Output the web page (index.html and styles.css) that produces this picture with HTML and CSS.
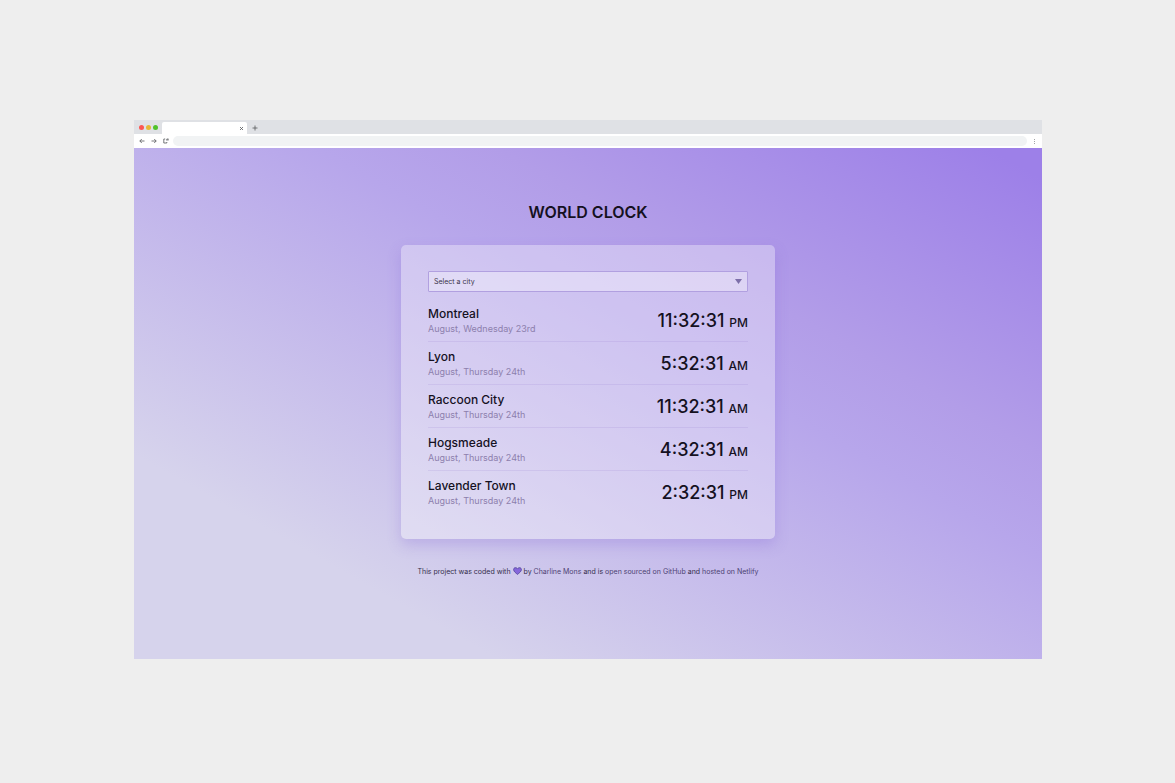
FILE: index.html
```html
<!DOCTYPE html>
<html lang="en">
<head>
<meta charset="utf-8">
<meta name="viewport" content="width=device-width, initial-scale=1">
<title>World Clock</title>
<link rel="stylesheet" href="styles.css">
</head>
<body>
<div class="browser">
  <div class="tabs">
    <div class="dots"><span class="dot red"></span><span class="dot yellow"></span><span class="dot green"></span></div>
    <div class="tab">
      <button class="icon-btn" type="button" aria-label="Close tab"><svg width="5" height="5" viewBox="0 0 5 5"><path d="M1 1l3 3M4 1L1 4"/></svg></button>
    </div>
    <button class="icon-btn new-tab" type="button" aria-label="New tab"><svg width="6" height="6" viewBox="0 0 6 6"><path d="M3 .5v5M.5 3h5"/></svg></button>
  </div>
  <div class="toolbar">
    <button class="icon-btn" type="button" aria-label="Back"><svg width="6" height="6" viewBox="0 0 6 6"><path d="M5.5 3H.8M2.8 1L.8 3l2 2"/></svg></button>
    <button class="icon-btn" type="button" aria-label="Forward"><svg width="6" height="6" viewBox="0 0 6 6"><path d="M.5 3h4.7M3.2 1l2 2-2 2"/></svg></button>
    <button class="icon-btn" type="button" aria-label="Reload"><svg width="6" height="6" viewBox="0 0 6 6"><path d="M2.2 1H.8v4h3V4M3.8 2.6V1h1.7M5 1v1.6"/></svg></button>
    <input class="address" type="text" aria-label="Address">
    <button class="icon-btn menu" type="button" aria-label="Menu"><svg width="3" height="5" viewBox="0 0 3 5"><path d="M1.5 0v1M1.5 2v1M1.5 4v1"/></svg></button>
  </div>
  <main class="page">
    <h1 class="title">WORLD CLOCK</h1>
    <section class="card">
      <div class="picker">
        <select class="select" aria-label="Select a city"><option>Select a city</option><option>Montreal</option><option>Lyon</option></select>
        <svg class="caret" width="7" height="5" viewBox="0 0 7 5"><path d="M0 0h7L3.5 5z"/></svg>
      </div>
      <ul class="cities">
        <li class="city"><div><h2 class="name">Montreal</h2><p class="date">August, Wednesday 23rd</p></div><p class="time">11:32:31 <small class="period">PM</small></p></li>
        <li class="city"><div><h2 class="name">Lyon</h2><p class="date">August, Thursday 24th</p></div><p class="time">5:32:31 <small class="period">AM</small></p></li>
        <li class="city"><div><h2 class="name">Raccoon City</h2><p class="date">August, Thursday 24th</p></div><p class="time">11:32:31 <small class="period">AM</small></p></li>
        <li class="city"><div><h2 class="name">Hogsmeade</h2><p class="date">August, Thursday 24th</p></div><p class="time">4:32:31 <small class="period">AM</small></p></li>
        <li class="city"><div><h2 class="name">Lavender Town</h2><p class="date">August, Thursday 24th</p></div><p class="time">2:32:31 <small class="period">PM</small></p></li>
      </ul>
    </section>
    <footer class="footer">This project was coded with <svg class="heart" width="9" height="8" viewBox="0 0 9 8"><path d="M4.5 7.4C2.8 6 .6 4.5.6 2.6.6.4 3.3 0 4.5 1.8 5.7 0 8.4.4 8.4 2.6c0 1.9-2.2 3.4-3.9 4.8z"/></svg> by <a href="#">Charline Mons</a> and is <a href="#">open sourced on GitHub</a> and <a href="#">hosted on Netlify</a></footer>
  </main>
</div>
</body>
</html>
```

FILE: styles.css
```css
* { box-sizing: border-box; }

body {
  margin: 0;
  min-height: 100vh;
  padding: 120px 133px 124px 134px;
  display: flex;
  background: #eeeeee;
  font-family: Inter, "Liberation Sans", sans-serif;
  color: #15111f;
}

h1, h2, p, ul { margin: 0; padding: 0; }

.browser {
  flex: 1;
  min-width: 0;
  display: flex;
  flex-direction: column;
  background: #fff;
}

.tabs {
  height: 14px;
  display: flex;
  align-items: flex-end;
  background: #dfe1e5;
}

.dots {
  display: flex;
  gap: 2px;
  padding: 0 4px 4px 5px;
}

.dot { width: 5px; height: 5px; border-radius: 50%; }
.red { background: #fc5753; }
.yellow { background: #e6b935; }
.green { background: #4fc22b; }

.tab {
  width: 85px;
  height: 12px;
  display: flex;
  align-items: center;
  justify-content: flex-end;
  padding-right: 3px;
  background: #fff;
  border-radius: 2px 2px 0 0;
}

.icon-btn {
  display: flex;
  padding: 0;
  border: 0;
  background: none;
}

.icon-btn svg {
  fill: none;
  stroke: #55585c;
  stroke-width: 0.8;
}

.new-tab { padding: 0 5px 3px; }

.menu svg { stroke: #8a8d91; }

.toolbar {
  height: 14px;
  display: flex;
  align-items: center;
  gap: 6px;
  padding: 0 6px 0 5px;
}

.address {
  flex: 1;
  min-width: 0;
  height: 10px;
  margin-left: -2px;
  padding: 0 6px;
  border: 0;
  border-radius: 5px;
  background: #f1f3f4;
  font: 7px/10px Inter, sans-serif;
}

.page {
  flex: 1;
  display: flex;
  flex-direction: column;
  align-items: center;
  padding: 54px 16px 0;
  background: linear-gradient(to top right, #d6d3ec 0%, #d6d3ec 20%, #b7a6eb 60%, #b29de8 70%, #9d80e8 97%, #9d80e8 100%);
}

.title {
  font-size: 16px;
  line-height: 20px;
  font-weight: 600;
}

.card {
  width: 100%;
  max-width: 374px;
  margin-top: 23px;
  padding: 26px 27px 25px;
  border-radius: 5px;
  background: rgba(255, 255, 255, 0.33);
  box-shadow: 0 6px 14px rgba(124, 92, 210, 0.25);
}

.picker {
  display: grid;
  align-items: center;
}

.select, .caret { grid-area: 1 / 1; }

.select {
  appearance: none;
  width: 100%;
  height: 21px;
  padding: 0 5px;
  border: 1px solid #b1a0e0;
  border-radius: 1px;
  background: rgba(255, 255, 255, 0.35);
  color: #3b354b;
  font: 7px/16px Inter, sans-serif;
}

.caret {
  justify-self: end;
  margin-right: 6px;
  fill: #7d6fa9;
  pointer-events: none;
}

.cities { list-style: none; padding-top: 7px; }

.city {
  height: 43px;
  display: flex;
  align-items: center;
  justify-content: space-between;
  border-bottom: 1px solid rgba(140, 115, 200, 0.15);
}

.city:last-child { border-bottom-color: transparent; }

.name {
  font-size: 12px;
  line-height: 16px;
  font-weight: 500;
}

.date {
  font-size: 9px;
  line-height: 13px;
  color: #8d80ad;
}

.time {
  padding-top: 4px;
  font-size: 18px;
  line-height: 24px;
  font-weight: 500;
}

.period { font-size: 12px; }

.footer {
  margin-top: 27px;
  font-size: 7px;
  line-height: 12px;
  text-align: center;
  color: #342d4b;
}

.footer a { color: #4d4273; text-decoration: none; }

.heart {
  vertical-align: -1px;
  fill: #8566db;
  stroke: #51429a;
  stroke-width: 0.8;
}
```
